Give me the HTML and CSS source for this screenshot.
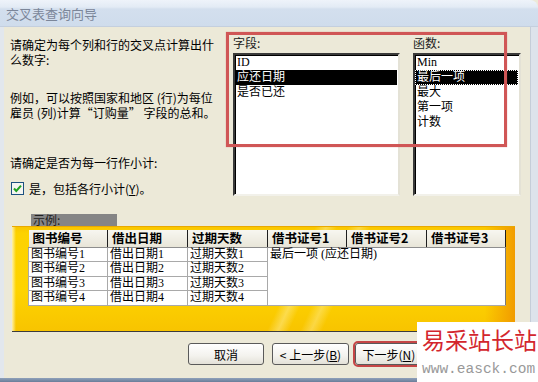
FILE: index.html
```html
<!DOCTYPE html>
<html lang="zh-CN">
<head>
<meta charset="utf-8">
<title>交叉表查询向导</title>
<link rel="stylesheet" href="styles.css">
</head>
<body>
<div class="window">
  <div class="titlebar">交叉表查询向导</div>
  <div class="frame">
    <div class="body">
      <div class="upper">
        <div class="instr">
          <p class="p1">请确定为每个列和行的交叉点计算出什<br>么数字:</p>
          <p class="p2">例如，可以按照国家和地区 (行)为每位<br>雇员 (列)计算“订购量” 字段的总和。</p>
          <p class="p3">请确定是否为每一行作小计:</p>
          <div class="check">
            <span class="box"><svg width="13" height="13" viewBox="0 0 13 13"><rect x="0.5" y="0.5" width="12" height="12" fill="#f4f4f0" stroke="#1c5180"/><polyline points="3,6.5 5.3,9 10,3.6" fill="none" stroke="#21a121" stroke-width="2"/></svg></span>
            <span>是，包括各行小计(<u>Y</u>)。</span>
          </div>
        </div>
        <div class="group g1">
          <div class="glabel">字段:</div>
          <div class="listbox">
            <div class="item">ID</div>
            <div class="item sel">应还日期</div>
            <div class="item">是否已还</div>
          </div>
        </div>
        <div class="group g2">
          <div class="glabel">函数:</div>
          <div class="listbox">
            <div class="item">Min</div>
            <div class="item sel focus">最后一项</div>
            <div class="item">最大</div>
            <div class="item">第一项</div>
            <div class="item">计数</div>
          </div>
        </div>
      </div>
      <div class="sample-label">示例:</div>
      <div class="panel">
        <table class="grid">
          <colgroup><col class="c79"><col class="c80"><col class="c80"><col class="c79"><col class="c80"><col class="c79"></colgroup>
          <thead>
            <tr><th>图书编号</th><th>借出日期</th><th>过期天数</th><th>借书证号1</th><th>借书证号2</th><th>借书证号3</th></tr>
          </thead>
          <tbody>
            <tr><td>图书编号1</td><td>借出日期1</td><td>过期天数1</td><td class="merged" colspan="3" rowspan="4">最后一项 (应还日期)</td></tr>
            <tr><td>图书编号2</td><td>借出日期2</td><td>过期天数2</td></tr>
            <tr><td>图书编号3</td><td>借出日期3</td><td>过期天数3</td></tr>
            <tr><td>图书编号4</td><td>借出日期4</td><td>过期天数4</td></tr>
          </tbody>
        </table>
      </div>
      <div class="buttons">
        <button class="btn">取消</button>
        <button class="btn prev">&lt; 上一步(<u>B</u>)</button>
        <button class="btn next">下一步(<u>N</u>) &gt;</button>
      </div>
    </div>
    <div class="rframe"></div>
  </div>
  <div class="bottomband"></div>
  <div class="annot"></div>
  <div class="watermark">
    <div class="wm1">易采站长站</div>
    <div class="wm2">www.easck.com</div>
  </div>
</div>
</body>
</html>
```

FILE: styles.css
```css
* { box-sizing: border-box; }
html, body { margin: 0; padding: 0; }
body {
  width: 538px;
  height: 382px;
  overflow: hidden;
  background: #ece9d8;
  font-family: "Liberation Serif", "Noto Sans CJK SC", sans-serif;
  font-size: 12px;
  color: #000;
}
.window {
  position: relative;
  width: 538px;
  height: 382px;
  display: flex;
  flex-direction: column;
}
.titlebar {
  height: 27px;
  flex: 0 0 27px;
  padding-left: 6px;
  line-height: 28px;
  font-family: "Noto Sans CJK SC", sans-serif;
  font-size: 13px;
  color: #7b8699;
  background: linear-gradient(#eef3fa 0, #e3ebf5 7px, #d3dfee 9px, #cfdcec 100%);
  border-bottom: 1px solid #c4cfde;
  border-top-right-radius: 8px;
}
.frame {
  flex: 1;
  display: flex;
}
.body {
  width: 530px;
  border-left: 4px solid #e2e7ed;
  padding-left: 6px;
  background: #ece9d8;
}
.rframe {
  width: 8px;
  background: #dde3eb;
  border-left: 1px solid #c5cdd8;
}
.bottomband {
  height: 4px;
  flex: 0 0 4px;
  background: linear-gradient(#8fa1ba, #6a7d99);
}

/* upper area */
.upper {
  height: 172px;
  padding-top: 10px;
  display: flex;
}
.instr {
  width: 223px;
  font-family: "Noto Sans CJK SC", sans-serif;
  line-height: 15px;
  white-space: nowrap;
}
.instr p { margin: 0; }
.p2 { margin-top: 23px !important; }
.p3 { margin-top: 35px !important; }
.check {
  margin-top: 11px;
  display: flex;
  align-items: center;
  gap: 5px;
  height: 15px;
  margin-left: 1px;
}
.box { display: block; width: 13px; height: 13px; }
.box svg { display: block; }

.group { display: flex; flex-direction: column; }
.g1 { width: 167px; }
.g2 { width: 108px; margin-left: 13px; }
.glabel {
  font-family: "Noto Sans CJK SC", sans-serif;
  line-height: 12px;
  height: 16px;
  color: #222;
}
.listbox {
  height: 143px;
  background: #fff;
  border-top: 2px solid #3a3a3a;
  border-left: 2px solid #3a3a3a;
  border-right: 2px solid #e4e2d6;
  border-bottom: 2px solid #f2f1ea;
  box-shadow: inset 1px 1px 0 #000;
}
.item {
  height: 15px;
  line-height: 15px;
  padding-left: 2px;
  margin-right: 1px;
  white-space: nowrap;
}
.item.sel { background: #000; color: #fff; }
.item.focus { outline: 1px dotted #fff; outline-offset: -1px; }

/* sample */
.sample-label {
  margin-top: 15px;
  margin-left: 21px;
  width: 86px;
  height: 12px;
  line-height: 12px;
  background: #858585;
  color: #222;
  padding-left: 2px;
  font-family: "Noto Sans CJK SC", sans-serif;
}
.panel {
  margin-left: 2px;
  width: 503px;
  height: 106px;
  padding: 3px 0 0 16px;
  border-top: 1px solid #e9a900;
  border-bottom: 1px solid #3c3c3c;
  background:
    linear-gradient(to right, rgba(255,250,215,0.8) 0, rgba(255,250,215,0) 4px),
    linear-gradient(to right, rgba(240,150,0,0) 94%, rgba(240,150,0,0.9) 100%),
    linear-gradient(115deg, rgba(255,255,255,0) 55%, rgba(255,240,170,0.45) 57%, rgba(255,255,255,0) 59%, rgba(255,255,255,0) 61%, rgba(255,240,170,0.4) 63%, rgba(255,255,255,0) 65%),
    linear-gradient(to bottom, #f9c600 0, #fdd200 6%, #fed400 60%, #f8c400 100%);
}
.grid {
  border-collapse: collapse;
  table-layout: fixed;
  width: 477px;
  font-size: 12px;
}
.c79 { width: 79px; }
.c80 { width: 80px; }
.grid th {
  height: 17px;
  padding: 0 0 0 4px;
  text-align: left;
  font-family: "Noto Sans CJK SC", sans-serif;
  font-weight: 700;
  font-size: 12.5px;
  line-height: 16px;
  background: linear-gradient(#f7f6f0, #e8e5d8);
  border-right: 1px solid #1e1e1e;
  border-bottom: 1px solid #8e8e8e;
  white-space: nowrap;
}
.grid td {
  height: 14.5px;
  padding: 0 0 0 2px;
  line-height: 13px;
  background: #fff;
  border: 1px solid #a9a9a9;
  white-space: nowrap;
}
.grid td.merged {
  vertical-align: top;
  border-right: 1px solid #7a7a7a;
  border-bottom: 1px solid #a9a9a9;
}

/* buttons */
.buttons {
  margin-top: 11px;
  margin-left: 178px;
  display: flex;
  gap: 8px;
}
.btn {
  width: 76px;
  height: 22px;
  padding: 0;
  font-family: "Noto Sans CJK SC", sans-serif;
  font-size: 12px;
  color: #000;
  background: linear-gradient(#ffffff, #f3f2ed 60%, #e3e1d8);
  border: 1px solid #5a5a5a;
  border-radius: 3px;
  white-space: nowrap;
}
.btn.prev { width: 77px; }
.btn.next {
  width: 77px;
  margin-left: -2px;
  outline: 2px solid #c64646;
  outline-offset: 0;
}

/* overlays */
.annot {
  position: absolute;
  left: 226px;
  top: 32px;
  width: 281px;
  height: 115px;
  border: 3px solid #d05656;
  box-shadow: 0 0 1px rgba(208,86,86,0.6);
}
.watermark {
  position: absolute;
  left: 417px;
  top: 322px;
  width: 121px;
  height: 60px;
  background: #fff;
  padding-left: 5px;
}
.wm1 {
  margin-top: 2px;
  font-family: "Noto Sans CJK SC", sans-serif;
  font-size: 23px;
  line-height: 30px;
  color: #d3262d;
  white-space: nowrap;
}
.wm2 {
  margin-top: 8px;
  font-family: "Liberation Mono", monospace;
  font-size: 14.5px;
  line-height: 14px;
  color: #999;
  white-space: nowrap;
}
```
